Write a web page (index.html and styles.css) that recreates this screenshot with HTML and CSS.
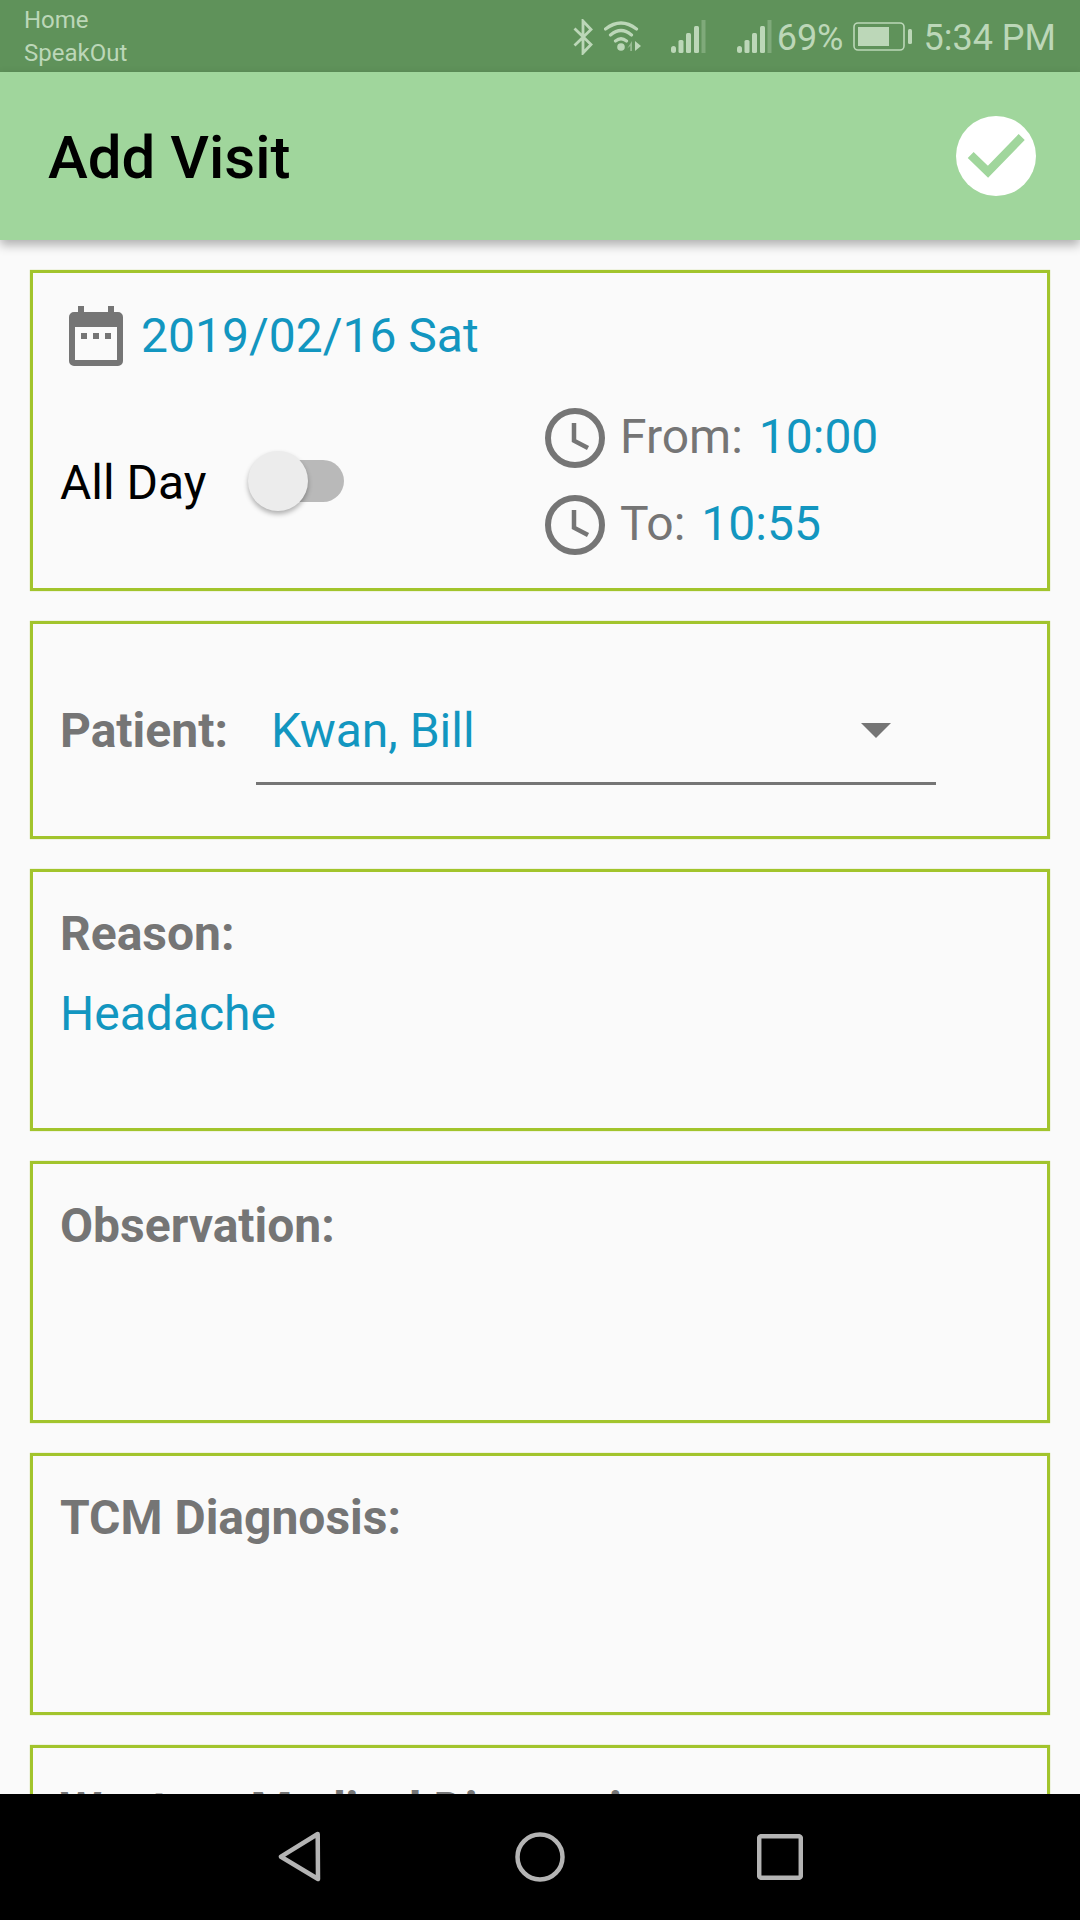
FILE: index.html
```html
<!DOCTYPE html>
<html lang="en">
<head>
<meta charset="utf-8">
<title>Add Visit</title>
<link rel="stylesheet" href="styles.css">
</head>
<body>
<div class="phone">
  <header class="status">
    <div class="notif"><span>Home</span><span>SpeakOut</span></div>
    <div class="sys">
      <svg class="i-bt" viewBox="0 0 20 36"><path d="M1.5 9.5 18 25.5 10 34V2l8 8.5L1.5 26.5" fill="none" stroke="currentColor" stroke-width="2.8"/></svg>
      <svg class="i-wifi" viewBox="0 0 39 32"><path d="M1.5 9Q17-3 32.5 9M6.5 15Q17 6 27.5 15M11.5 21Q17 16.500 22.500 21" fill="none" stroke="currentColor" stroke-width="3.2" stroke-linecap="round"/><circle cx="17" cy="27" r="3.8" fill="currentColor"/><path d="M28 21v10h-1.800v-5l-3 2.500z" fill="currentColor" opacity=".6"/><path d="M31 21v10l6-5z" fill="currentColor"/></svg>
      <svg class="i-sig first" viewBox="0 0 35 33"><g fill="currentColor"><rect x="0" y="26" width="5" height="7" rx="2.500"/><rect x="7.500" y="20" width="5" height="13" rx="1.500"/><rect x="15" y="13" width="5" height="20" rx="1.500"/><rect x="23" y="6" width="5" height="27" rx="1.500"/></g><rect x="30.500" y="0" width="4" height="33" fill="currentColor" opacity=".35"/></svg>
      <svg class="i-sig second" viewBox="0 0 35 33"><g fill="currentColor"><rect x="0" y="26" width="5" height="7" rx="2.500"/><rect x="7.500" y="20" width="5" height="13" rx="1.500"/><rect x="15" y="13" width="5" height="20" rx="1.500"/><rect x="23" y="6" width="5" height="27" rx="1.500"/></g><rect x="30.500" y="0" width="4" height="33" fill="currentColor" opacity=".35"/></svg>
      <span class="pct">69%</span>
      <svg class="i-bat" viewBox="0 0 60 29"><rect x="1" y="1" width="50" height="27" rx="4" fill="none" stroke="currentColor" stroke-width="1.600"/><rect x="5" y="5" width="31" height="19" fill="currentColor"/><rect x="55" y="7" width="4" height="15" rx="1.500" fill="currentColor"/></svg>
      <span class="time">5:34 PM</span>
    </div>
  </header>

  <div class="appbar">
    <h1>Add Visit</h1>
    <svg class="done" viewBox="0 0 80 80"><circle cx="40" cy="40" r="40" fill="#fff"/><path d="M14.700 39 32 55.700 65.700 21" fill="none" stroke="#a0d69c" stroke-width="8.500"/></svg>
  </div>

  <main class="content">
    <section class="card when">
      <div class="date-row">
        <svg class="i-cal" viewBox="0 0 54 60"><path d="M9 0h6v6h24V0h6v6h4a5 5 0 0 1 5 5v44a5 5 0 0 1-5 5H5a5 5 0 0 1-5-5V11a5 5 0 0 1 5-5h4z" fill="#757575"/><rect x="6" y="21" width="42" height="33" fill="#fafafa"/><g fill="#757575"><rect x="12" y="27" width="6" height="6"/><rect x="24" y="27" width="6" height="6"/><rect x="36" y="27" width="6" height="6"/></g></svg>
        <span class="link">2019/02/16 Sat</span>
      </div>
      <div class="when-row">
        <div class="allday">
          <span class="allday-label">All Day</span>
          <div class="switch"><span class="thumb"></span></div>
        </div>
        <div class="times">
          <div class="time-row">
            <svg class="i-clock" viewBox="0 0 60 60"><circle cx="30" cy="30" r="27" fill="none" stroke="#757575" stroke-width="6"/><path d="M29 15v17.700L43 40" fill="none" stroke="#757575" stroke-width="4.500"/></svg>
            <span class="time-label">From:</span><span class="link">10:00</span>
          </div>
          <div class="time-row">
            <svg class="i-clock" viewBox="0 0 60 60"><circle cx="30" cy="30" r="27" fill="none" stroke="#757575" stroke-width="6"/><path d="M29 15v17.700L43 40" fill="none" stroke="#757575" stroke-width="4.500"/></svg>
            <span class="time-label">To:</span><span class="link">10:55</span>
          </div>
        </div>
      </div>
    </section>

    <section class="card patient">
      <span class="label">Patient:</span>
      <div class="select">
        <span class="link">Kwan, Bill</span>
        <span class="caret"></span>
      </div>
    </section>

    <section class="card field">
      <div class="label">Reason:</div>
      <div class="link value">Headache</div>
    </section>
    <section class="card field">
      <div class="label">Observation:</div>
    </section>
    <section class="card field">
      <div class="label">TCM Diagnosis:</div>
    </section>
    <section class="card field">
      <div class="label">Western Medical Diagnosis:</div>
    </section>
  </main>

  <nav class="navbar">
    <span class="nav-slot"><svg class="n-back" viewBox="0 0 44 52"><path d="M39.700 3 3 25.700 40 48z" fill="none" stroke="#b4b4b4" stroke-width="4.500" stroke-linejoin="round"/></svg></span>
    <span class="nav-slot"><svg class="n-home" viewBox="0 0 50 50"><circle cx="25" cy="25" r="22.500" fill="none" stroke="#b4b4b4" stroke-width="4.500"/></svg></span>
    <span class="nav-slot"><svg class="n-recent" viewBox="0 0 46 46"><rect x="2.200" y="2.200" width="41.600" height="41.600" rx="2" fill="none" stroke="#b4b4b4" stroke-width="4.500"/></svg></span>
  </nav>
</div>
</body>
</html>
```

FILE: styles.css
```css
* { box-sizing: border-box; }
html, body { margin: 0; padding: 0; }
body { font-family: Roboto, "Noto Sans", sans-serif; background: #fafafa; }
.phone { width: 1080px; height: 1920px; display: flex; flex-direction: column; overflow: hidden; }

.status { height: 72px; flex: none; background: #5f925a; color: #bcd7b8; display: flex; justify-content: space-between; padding: 0 24px; }
.notif { display: flex; flex-direction: column; font-size: 24px; line-height: 33px; padding-top: 4px; }
.sys { display: flex; align-items: center; }
.i-bt { width: 20px; height: 36px; margin-right: 11px; margin-top: 2px; }
.i-wifi { width: 39px; height: 32px; margin-right: 28px; }
.i-sig { width: 35px; height: 33px; }
.i-sig.first { margin-right: 31px; }
.i-sig.second { margin-right: 5px; }
.pct { font-size: 36px; margin-right: 9px; padding-top: 3px; }
.i-bat { width: 60px; height: 29px; margin-right: 11px; margin-top: 1px; }
.time { font-size: 36px; padding-top: 3px; }

.appbar { height: 168px; flex: none; background: #a0d69c; display: flex; align-items: center; justify-content: space-between; padding: 0 44px 0 48px; box-shadow: 0 5px 10px rgba(0,0,0,.3); position: relative; z-index: 1; }
.appbar h1 { margin: 2px 0 0; font-size: 60px; font-weight: 500; color: #000; }
.done { width: 80px; height: 80px; }

.content { flex: 1; min-height: 0; overflow: hidden; padding: 30px 30px 0; display: flex; flex-direction: column; gap: 30px; }
.card { flex: none; border: 3px solid #a2c42c; box-shadow: 0 0 1px rgba(162,196,44,.7); padding: 0 27px; }
.link { color: #1296c0; font-size: 48px; }
.label { color: #757575; font-size: 48px; font-weight: 700; }

.when { height: 321px; }
.date-row { display: flex; align-items: center; padding: 33px 0 0 9px; gap: 18px; height: 93px; }
.date-row .link { margin-top: -2px; }
.i-cal { width: 54px; height: 60px; }
.when-row { display: flex; justify-content: space-between; padding-top: 42px; }
.allday { display: flex; align-items: center; height: 146px; }
.allday-label { font-size: 48px; color: #000; width: 188px; padding-top: 2px; }
.switch { width: 96px; height: 42px; position: relative; }
.switch::before { content: ""; position: absolute; left: 12px; right: 0; top: 0; bottom: 0; border-radius: 21px; background: #b9b9b9; }
.thumb { position: absolute; left: 0; top: -9px; width: 60px; height: 60px; border-radius: 50%; background: #ececec; box-shadow: 0 3px 5px rgba(0,0,0,.3); }
.times { width: 475px; display: flex; flex-direction: column; gap: 27px; }
.time-row { display: flex; align-items: center; height: 60px; }
.time-row span { margin-bottom: 4px; }
.i-clock { width: 60px; height: 60px; margin-right: 15px; }
.time-label { font-size: 48px; color: #757575; margin-right: 16px; }

.patient { height: 218px; display: flex; align-items: center; }
.patient .label { width: 196px; }
.select { width: 680px; height: 106px; margin-top: 4px; border-bottom: 3px solid #757575; display: flex; align-items: center; justify-content: space-between; padding: 0 45px 0 15px; }
.caret { width: 0; height: 0; border-left: 15px solid transparent; border-right: 15px solid transparent; border-top: 15px solid #757575; }

.field { height: 262px; padding-top: 33px; }
.value { margin-top: 23px; }

.navbar { height: 126px; flex: none; background: #000; position: relative; z-index: 1; display: flex; justify-content: center; }
.nav-slot { width: 240px; display: flex; align-items: center; justify-content: center; }
.n-back { width: 44px; height: 52px; }
.n-home { width: 50px; height: 50px; }
.n-recent { width: 46px; height: 46px; }
```
